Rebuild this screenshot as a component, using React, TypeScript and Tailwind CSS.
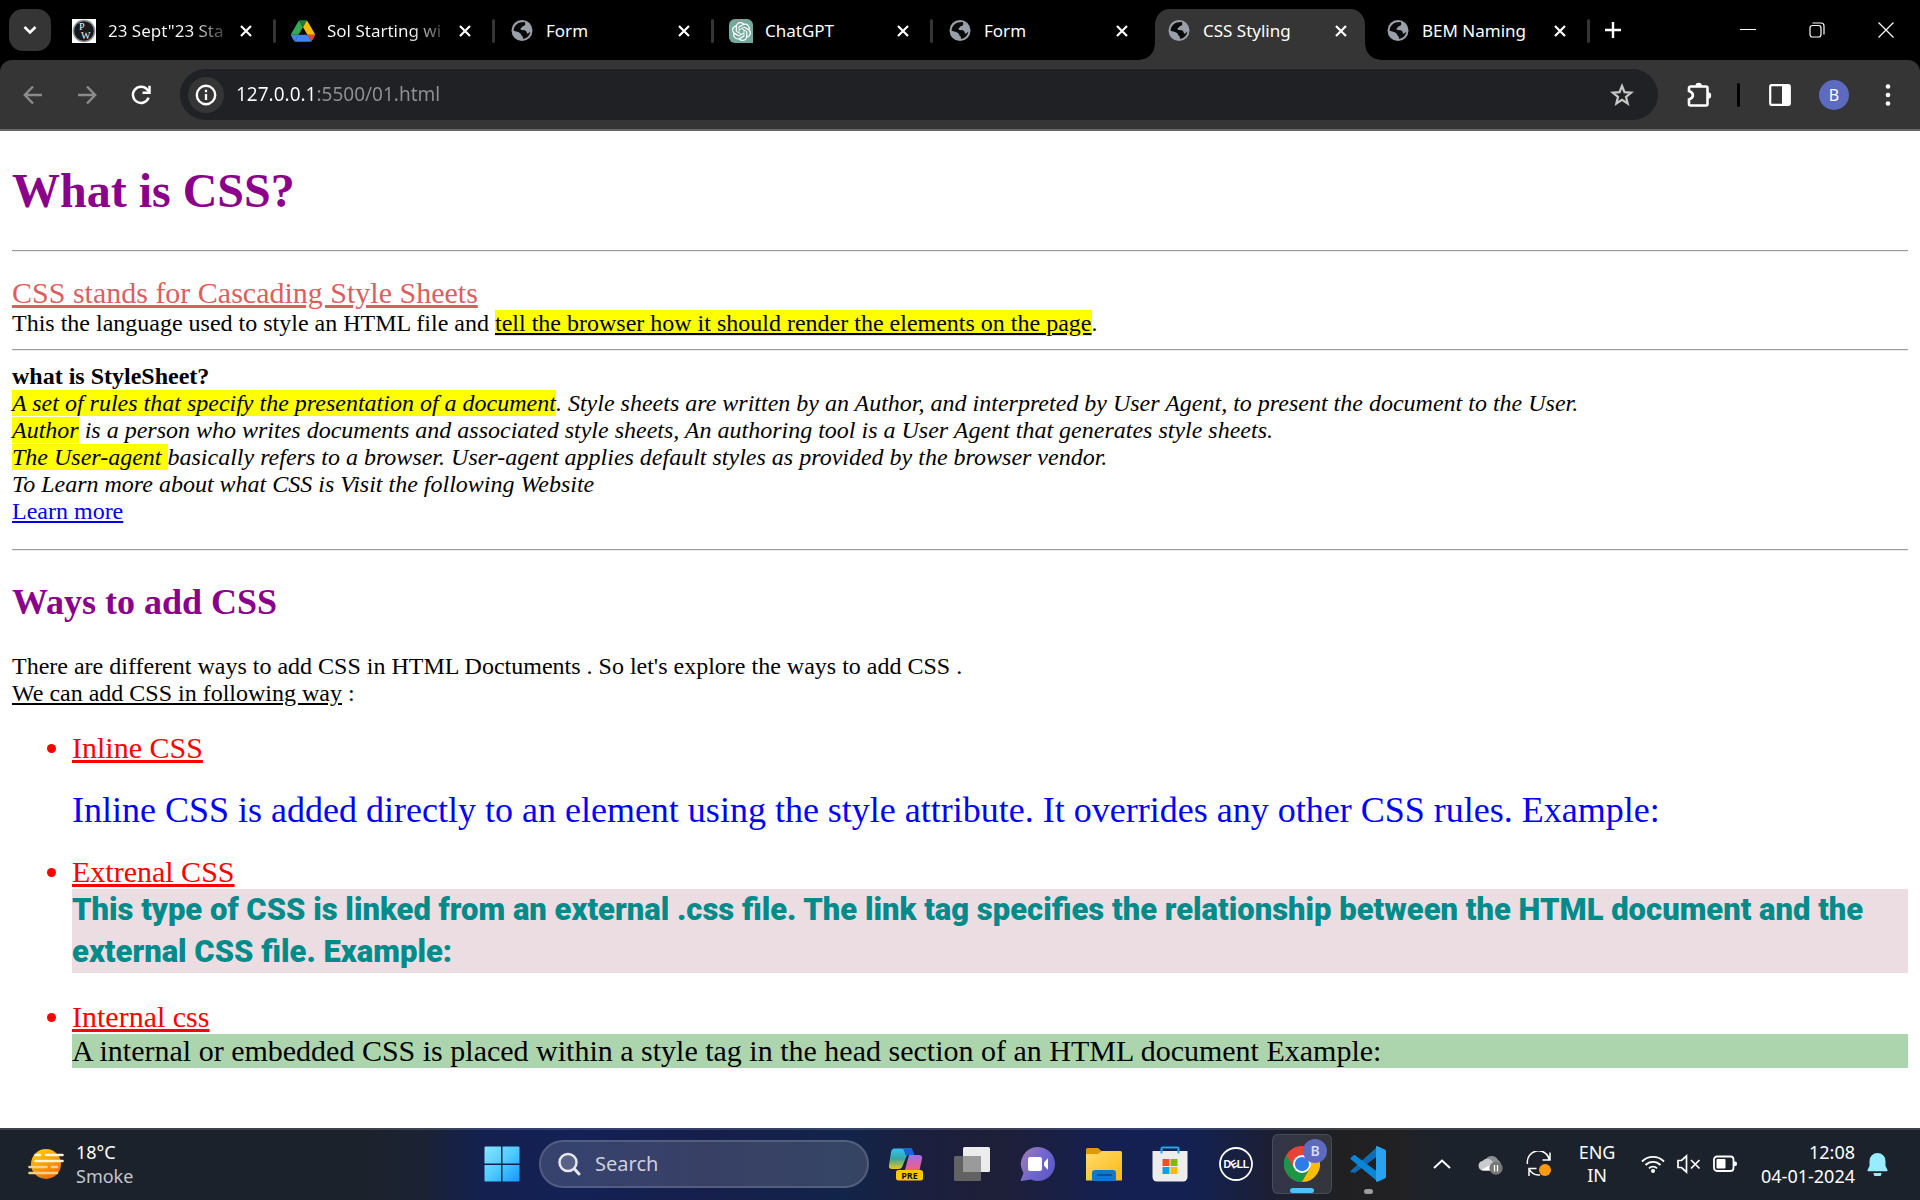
import type { ReactNode } from "react";
import { SiOpenai } from "react-icons/si";

const serif = "font-['Liberation_Serif','Times_New_Roman',serif]";
const sans = "font-['Noto_Sans','Segoe_UI',sans-serif]";

/* ---------- Tab icons ---------- */

function GlobeIcon() {
  return (
    <svg viewBox="0 0 24 24" className="size-6" aria-hidden="true">
      <circle cx="12" cy="11.5" r="10.5" fill="#9aa0a9" />
      <path
        d="M3.6 11.8C3.7 7.200 7 3.700 11.600 3.300L14.900 2.900C15.700 5 15.200 6.600 13.700 7C12 7.200 12.300 8.500 11.200 8.800C10.200 9.300 10.400 10.700 11.500 11L15 11.300C17.200 12.300 16.300 14.300 17.700 14.800L20.300 12.800C19.700 16.700 16.600 19.600 13.100 19.900L12.700 17.500C11.300 17 11.200 15.300 10.200 14.300C8.400 12.800 6 12.800 3.600 11.800Z"
        fill="#0a0a0b"
      />
    </svg>
  );
}

function PwIcon() {
  return (
    <svg viewBox="0 0 24 24" className="size-6" aria-hidden="true">
      <rect width="24" height="24" fill="#fff" />
      <circle cx="12" cy="12" r="11.300" fill="#8a8f92" />
      <circle cx="12" cy="12" r="9.800" fill="#161a1c" />
      <text x="7" y="11" fontSize="10" fill="#f2f2f2" fontFamily="Liberation Serif, serif">P</text>
      <text x="9" y="19.500" fontSize="10" fill="#f2f2f2" fontFamily="Liberation Serif, serif">W</text>
    </svg>
  );
}

function DriveIcon() {
  return (
    <svg viewBox="0 0 87.3 78" className="size-6" aria-hidden="true">
      <path d="m6.6 66.85 3.85 6.65c.8 1.4 1.95 2.5 3.3 3.3l13.75-23.8H0c0 1.55.4 3.1 1.2 4.5z" fill="#4285f4" />
      <path d="M43.65 25 29.9 1.2c-1.35.8-2.5 1.9-3.300 3.3l-25.4 44A9.06 9.06 0 0 0 0 53h27.5z" fill="#34a853" />
      <path d="M73.55 76.8c1.35-.8 2.5-1.9 3.3-3.3l1.6-2.75 7.65-13.25c.8-1.4 1.2-2.95 1.2-4.5H59.8l5.85 11.5z" fill="#ea4335" />
      <path d="M43.65 25 57.4 1.2C56.05.4 54.5 0 52.9 0H34.400c-1.6 0-3.15.45-4.5 1.2z" fill="#188038" />
      <path d="M59.8 53H27.5L13.75 76.8c1.35.8 2.9 1.2 4.5 1.2h50.8c1.6 0 3.15-.45 4.5-1.2z" fill="#4285f4" />
      <path d="m73.400 26.5-12.7-22c-.8-1.4-1.95-2.5-3.300-3.3L43.65 25 59.8 53h27.45c0-1.55-.4-3.1-1.2-4.5z" fill="#fbbc04" />
    </svg>
  );
}

function GptIcon() {
  return (
    <span className="flex size-6 items-center justify-center rounded-md rounded-br-none bg-[#74aa9c]">
      <SiOpenai className="size-[19px] text-white" />
    </span>
  );
}

function CloseIcon() {
  return (
    <svg viewBox="0 0 12 12" className="size-3" aria-hidden="true">
      <path d="M1 1 11 11M11 1 1 11" stroke="#fff" strokeWidth="2.200" />
    </svg>
  );
}

/* ---------- Browser chrome ---------- */

type TabInfo = { title: string; icon: ReactNode; faded?: boolean; active?: boolean; divider?: boolean };

const tabs: TabInfo[] = [
  { title: '23 Sept"23 Sta', icon: <PwIcon />, faded: true, divider: true },
  { title: "Sol Starting wi", icon: <DriveIcon />, faded: true, divider: true },
  { title: "Form", icon: <GlobeIcon />, divider: true },
  { title: "ChatGPT", icon: <GptIcon />, divider: true },
  { title: "Form", icon: <GlobeIcon /> },
  { title: "CSS Styling", icon: <GlobeIcon />, active: true },
  { title: "BEM Naming", icon: <GlobeIcon />, divider: true },
];

function Tab({ title, icon, faded, active, divider }: TabInfo) {
  return (
    <li className="relative w-[219px]">
      {active && (
        <>
          <span className="absolute inset-y-0 right-1.5 left-[3px] rounded-t-[15px] bg-[#353535]" />
          <span className="absolute bottom-0 -left-3 size-[15px] bg-[radial-gradient(circle_at_0_0,#000_14px,#353535_15px)]" />
          <span className="absolute -right-[9px] bottom-0 size-[15px] bg-[radial-gradient(circle_at_100%_0,#000_14px,#353535_15px)]" />
        </>
      )}
      <div className="relative flex h-11 items-center pl-[15px]">
        {icon}
        <span
          className={
            faded
              ? "ml-3 w-[118px] bg-linear-to-r from-white from-70% to-white/20 bg-clip-text text-[17px] whitespace-nowrap text-transparent"
              : "ml-3 w-[118px] text-[17px] whitespace-nowrap text-white"
          }
        >
          {title}
        </span>
        <button type="button" aria-label={`Close ${title}`} className="ml-2 flex size-6 items-center justify-center">
          <CloseIcon />
        </button>
        {divider && <span className="ml-auto h-6 w-[3px] rounded-full bg-[#353535]" />}
      </div>
    </li>
  );
}

function TabStrip() {
  return (
    <div className="flex h-[60px] items-start bg-black pt-[9px]">
      <button type="button" aria-label="Search tabs" className="ml-[9px] flex size-[42px] shrink-0 items-center justify-center rounded-[14px] bg-[#353535]">
        <svg viewBox="0 0 14 10" className="h-2.5 w-3.5">
          <path d="m1.500 2 5.500 5.500L12.500 2" stroke="#fff" strokeWidth="2.600" fill="none" />
        </svg>
      </button>
      <ul className="ml-1.5 flex h-[51px]">
        {tabs.map((tab, index) => (
          <Tab key={index} {...tab} />
        ))}
      </ul>
      <button type="button" aria-label="New tab" className="ml-0.5 flex size-[42px] items-center justify-center">
        <svg viewBox="0 0 16 16" className="size-4">
          <path d="M8 0v16M0 8h16" stroke="#fff" strokeWidth="2.400" />
        </svg>
      </button>
      <div className="ml-auto flex h-[42px]">
        <button type="button" aria-label="Minimize" className="flex w-[69px] items-center justify-center">
          <svg viewBox="0 0 16 16" className="size-4"><path d="M0 7.500h16" stroke="#fff" /></svg>
        </button>
        <button type="button" aria-label="Restore" className="flex w-[69px] items-center justify-center">
          <svg viewBox="0 0 16 16" className="size-4" fill="none" stroke="#fff" strokeWidth="1.200">
            <rect x="1" y="3.500" width="11" height="11.500" rx="2.500" />
            <path d="M3.500 1H12a3 3 0 0 1 3 3v8.500" />
          </svg>
        </button>
        <button type="button" aria-label="Close window" className="flex w-[69px] items-center justify-center">
          <svg viewBox="0 0 16 16" className="size-4"><path d="m.5.5 15 15m0-15-15 15" stroke="#fff" strokeWidth="1.200" /></svg>
        </button>
      </div>
    </div>
  );
}

function Toolbar() {
  return (
    <div className="bg-black">
      <div className="flex h-[71px] items-center rounded-t-xl border-b-2 border-[#666] bg-[#353535] pr-5 pl-[15px]">
        <button type="button" aria-label="Back" className="flex w-9 justify-center">
          <svg viewBox="0 0 20 20" className="size-5" fill="none" stroke="#8b8b8b" strokeWidth="2.400">
            <path d="M19 10H2.500M10 1.500 1.800 10l8.200 8.500" />
          </svg>
        </button>
        <button type="button" aria-label="Forward" className="ml-[18px] flex w-9 justify-center">
          <svg viewBox="0 0 20 20" className="size-5" fill="none" stroke="#8b8b8b" strokeWidth="2.400">
            <path d="M1 10h16.500M10 1.500l8.200 8.500-8.200 8.500" />
          </svg>
        </button>
        <button type="button" aria-label="Reload" className="ml-[18px] flex w-9 justify-center">
          <svg viewBox="0 0 20 20" className="size-5" fill="none" stroke="#fff" strokeWidth="2.500">
            <path d="M17.600 12.800A8.100 8.100 0 1 1 16.200 4.500L18 6.500" />
            <path d="M18.500.8v7h-7" />
          </svg>
        </button>
        <div className="ml-[21px] flex h-[51px] flex-1 items-center rounded-full bg-[#202124] pr-6 pl-2">
          <button type="button" aria-label="Site information" className="flex size-9 items-center justify-center rounded-full bg-[#353535]">
            <svg viewBox="0 0 22 22" className="size-[22px]">
              <circle cx="11" cy="11" r="9.200" fill="none" stroke="#fff" strokeWidth="2.400" />
              <path d="M11 10v6M11 5.800v2.400" stroke="#fff" strokeWidth="2.300" />
            </svg>
          </button>
          <input
            aria-label="Address"
            defaultValue="127.0.0.1:5500/01.html"
            className="ml-3 min-w-0 flex-1 bg-linear-to-r from-white from-[79px] to-[#8f9195] to-[79px] bg-clip-text text-[19px] text-transparent outline-none"
          />
          <button type="button" aria-label="Bookmark this page">
            <svg viewBox="0 0 24 24" className="size-6" fill="none" stroke="#c7c7c7" strokeWidth="2.200">
              <path d="m12 3 2.500 6.200 6.700.5-5.200 4.300 1.700 6.500-5.700-3.600-5.700 3.600L8 14 2.800 9.700l6.700-.5Z" />
            </svg>
          </button>
        </div>
        <button type="button" aria-label="Extensions" className="ml-7 flex w-[26px] justify-center">
          <svg viewBox="0 0 26 26" className="size-[26px]">
            <path
              d="M4.500 4.500H20a1.500 1.500 0 0 1 1.500 1.500v16a1.500 1.500 0 0 1-1.500 1.500H4.500A1.500 1.500 0 0 1 3 22v-4.500c5.200-1.800 5.200-6.700 0-8.500V6a1.500 1.500 0 0 1 1.500-1.500Z"
              fill="none"
              stroke="#fff"
              strokeWidth="2.600"
            />
            <path d="M9.500 4a3.200 3.200 0 0 1 6.400 0ZM22 10.300a3.200 3.200 0 0 1 0 6.400Z" fill="#fff" />
          </svg>
        </button>
        <span className="ml-[25px] h-6 w-[3px] rounded-full bg-black" />
        <button type="button" aria-label="Side panel" className="ml-7 flex w-6 justify-center">
          <svg viewBox="0 0 22 22" className="size-[22px]">
            <rect x="1.200" y="1.200" width="19.600" height="19.600" rx="1.500" fill="none" stroke="#fff" strokeWidth="2.200" />
            <path d="M13 1h8v20h-8z" fill="#fff" />
          </svg>
        </button>
        <button type="button" aria-label="Profile" className="ml-[27px] flex size-[30px] items-center justify-center rounded-full bg-[#5c6bc0] text-base text-white">
          B
        </button>
        <button type="button" aria-label="Menu" className="ml-[27px] flex w-6 justify-center">
          <svg viewBox="0 0 6 24" className="h-6 w-1.5" fill="#fff">
            <circle cx="3" cy="3.500" r="2.300" />
            <circle cx="3" cy="12" r="2.300" />
            <circle cx="3" cy="20.500" r="2.300" />
          </svg>
        </button>
      </div>
    </div>
  );
}

/* ---------- Page ---------- */

function Rule() {
  return <hr className="border-t border-b border-t-[#9a9a9a] border-b-[#ededed]" />;
}

function Mark({ children }: { children: ReactNode }) {
  return <mark className="bg-[#ff0] text-inherit">{children}</mark>;
}

function Article() {
  return (
    <main className={`${serif} flex-1 bg-white px-3 text-2xl leading-[27px] text-black`}>
      <h1 className="my-8 text-5xl leading-[55px] font-bold text-[#8b008b]">What is CSS?</h1>
      <Rule />
      <p className="mt-6 text-[30px] leading-[34px] text-[#dc5f5f] underline">CSS stands for Cascading Style Sheets</p>
      <p className="mb-3">
        This the language used to style an HTML file and{" "}
        <u><Mark>tell the browser how it should render the elements on the page</Mark></u>.
      </p>
      <Rule />
      <p className="mt-3 font-bold">what is StyleSheet?</p>
      <div className="italic">
        <p>
          <Mark>A set of rules that specify the presentation of a document</Mark>. Style sheets are written by an
          Author, and interpreted by User Agent, to present the document to the User.
        </p>
        <p>
          <Mark>Author</Mark> is a person who writes documents and associated style sheets, An authoring tool is a User
          Agent that generates style sheets.
        </p>
        <p>
          <Mark>The User-agent </Mark>basically refers to a browser. User-agent applies default styles as provided by
          the browser vendor.
        </p>
        <p>To Learn more about what CSS is Visit the following Website</p>
      </div>
      <p className="mb-6">
        <a href="#learn-more" className="text-[#00e] underline">Learn more</a>
      </p>
      <Rule />
      <h2 className="mt-[31px] mb-[30px] text-4xl leading-[41px] font-bold text-[#8b008b]">Ways to add CSS</h2>
      <p>There are different ways to add CSS in HTML Doctuments . So let's explore the ways to add CSS .</p>
      <p><u>We can add CSS in following way</u> :</p>
      <ul className="my-6 list-disc pl-[60px] text-[30px] leading-[34px] text-[#f00]">
        <li>
          <u>Inline CSS</u>
          <p className="my-6 text-4xl leading-[42px] text-[#00f]">
            Inline CSS is added directly to an element using the style attribute. It overrides any other CSS rules.
            Example:
          </p>
        </li>
        <li>
          <u>Extrenal CSS</u>
          <p className="mb-[27px] bg-[#ecdde3] font-['Impact','Roboto',sans-serif] text-[31px] leading-[42px] font-black text-[#008b8b]">
            This type of CSS is linked from an external .css file. The link tag specifies the relationship between the
            HTML document and the external CSS file. Example:
          </p>
        </li>
        <li>
          <u>Internal css</u>
          <p className="bg-[#add5ad] text-black">
            A internal or embedded CSS is placed within a style tag in the head section of an HTML document Example:
          </p>
        </li>
      </ul>
    </main>
  );
}

/* ---------- Taskbar icons ---------- */

function WeatherIcon() {
  return (
    <svg viewBox="0 0 36 30" className="h-[30px] w-9" aria-hidden="true">
      <defs>
        <linearGradient id="sun" x1="0.200" y1="0" x2="0.700" y2="1">
          <stop offset="0" stopColor="#ffd000" />
          <stop offset="1" stopColor="#f06a0a" />
        </linearGradient>
      </defs>
      <circle cx="18" cy="15" r="15" fill="url(#sun)" />
      <g strokeWidth="2.600" strokeLinecap="round">
        <path d="M7.500 6H12M18 6h16.500M7.500 12h27" stroke="#fff3d6" />
        <path d="M1.500 18h17M24 18h5M1.500 24H29" stroke="#f3d08a" />
      </g>
    </svg>
  );
}

function StartIcon() {
  return (
    <svg viewBox="0 0 36 36" className="size-9" aria-hidden="true">
      <defs>
        <linearGradient id="win" x1="0" y1="0" x2="1" y2="1" gradientUnits="objectBoundingBox">
          <stop offset="0" stopColor="#8be3ff" />
          <stop offset="0.500" stopColor="#4fcbff" />
          <stop offset="1" stopColor="#1298ff" />
        </linearGradient>
      </defs>
      <path
        d="M1.500.5H17v17H.5v-16a1 1 0 0 1 1-1ZM18.500.5h16a1 1 0 0 1 1 1v16h-17ZM.5 19H17v16.500H1.500a1 1 0 0 1-1-1ZM18.500 19h17v15.500a1 1 0 0 1-1 1h-16Z"
        fill="url(#win)"
      />
    </svg>
  );
}

function CopilotIcon() {
  return (
    <svg viewBox="0 0 36 36" className="size-9" aria-hidden="true">
      <defs>
        <linearGradient id="cpA" x1="0" y1="0" x2="0" y2="1">
          <stop offset="0" stopColor="#35c1f5" />
          <stop offset="0.500" stopColor="#3aa5a0" />
          <stop offset="1" stopColor="#e8c81e" />
        </linearGradient>
        <linearGradient id="cpB" x1="0" y1="0" x2="0" y2="1">
          <stop offset="0" stopColor="#a768f0" />
          <stop offset="1" stopColor="#f2607c" />
        </linearGradient>
      </defs>
      <path d="M6.500 2.500h17L26 9h-7l-4.500 11c-.7 2-2 3-4 3H4c-2.500 0-3.500-1.500-3-4L3 6c.6-2.300 1.500-3.500 3.500-3.500Z" fill="url(#cpA)" />
      <path d="M17 2.500h4.500c2.500 0 3.800 1.500 4.500 6.500h-9c0-3-1-5-3-6.500Z" fill="#1665dc" />
      <path d="M21 9h10c2.500 0 3.500 1.500 3 4l-2.500 11H17Z" fill="url(#cpB)" />
      <rect x="8" y="24" width="27" height="10.500" rx="2.500" fill="#ffc800" />
      <text x="21.500" y="32.500" fontSize="9" fontWeight="bold" textAnchor="middle" fill="#111" fontFamily="Open Sans, sans-serif">PRE</text>
    </svg>
  );
}

function TaskViewIcon() {
  return (
    <svg viewBox="0 0 36 36" className="size-9" aria-hidden="true">
      <rect x="9" y="1" width="27" height="25" rx="1.500" fill="#ececec" />
      <rect x="0" y="10" width="27" height="25" rx="1.500" fill="#626262" />
      <path d="M9 10h16.500a1.500 1.500 0 0 1 1.500 1.500V26H9Z" fill="#9a9a9a" />
    </svg>
  );
}

function ChatIcon() {
  return (
    <svg viewBox="0 0 36 36" className="size-9" aria-hidden="true">
      <defs>
        <linearGradient id="chat" x1="0" y1="0.200" x2="1" y2="0.800">
          <stop offset="0" stopColor="#a07ab4" />
          <stop offset="0.500" stopColor="#6f67d0" />
          <stop offset="1" stopColor="#5b57c4" />
        </linearGradient>
      </defs>
      <path d="M18 1a17 17 0 1 1-7 32.500L1.500 35c-.8 0-1-.6-.6-1.200L3.500 27A17 17 0 0 1 18 1Z" fill="url(#chat)" />
      <rect x="8" y="11" width="14" height="14" rx="2" fill="#fff" />
      <path d="M24 16.500 28 12v12l-4-4.500Z" fill="#fff" />
    </svg>
  );
}

function FolderIcon() {
  return (
    <svg viewBox="0 0 36 36" className="size-9" aria-hidden="true">
      <defs>
        <linearGradient id="fold" x1="0" y1="0" x2="1" y2="1">
          <stop offset="0" stopColor="#ffdc6e" />
          <stop offset="1" stopColor="#fbb812" />
        </linearGradient>
      </defs>
      <path d="M0 3.500A1.500 1.500 0 0 1 1.500 2H12l4 3.500V9H0Z" fill="#dd9a04" />
      <path d="M0 8h12l4-3h18.500A1.500 1.500 0 0 1 36 6.500V34.500H0Z" fill="url(#fold)" />
      <path d="M6 35V27a3 3 0 0 1 3-3h18a3 3 0 0 1 3 3v8Z" fill="#0f78cc" />
      <path d="M12 29h13" stroke="#08539a" strokeWidth="2" strokeLinecap="round" />
    </svg>
  );
}

function StoreIcon() {
  return (
    <svg viewBox="0 0 36 36" className="size-9" aria-hidden="true">
      <path d="M.5 5h35v26a4.500 4.500 0 0 1-4.500 4.500H5A4.500 4.500 0 0 1 .5 31Z" fill="#ededed" />
      <path d="M9.500 7.500V2.500a1 1 0 0 1 1-1h15a1 1 0 0 1 1 1v5" fill="none" stroke="#22a7ea" strokeWidth="2" />
      <path d="M10.500 13h7v7h-7z" fill="#f25022" />
      <path d="M18.500 13h7v7h-7z" fill="#7fba00" />
      <path d="M10.500 21h7v7h-7z" fill="#00a4ef" />
      <path d="M18.500 21h7v7h-7z" fill="#ffb900" />
    </svg>
  );
}

function DellIcon() {
  return (
    <svg viewBox="0 0 36 36" className="size-9" aria-hidden="true" fill="#fff" fontFamily="Liberation Sans, sans-serif" fontWeight="bold" fontSize="10.500">
      <circle cx="18" cy="18" r="16" fill="none" stroke="#fff" strokeWidth="1.800" />
      <text x="5.500" y="21.700">D</text>
      <text x="12.500" y="21.700" transform="rotate(-32 16 18)">E</text>
      <text x="18.800" y="21.700">L</text>
      <text x="24.800" y="21.700">L</text>
    </svg>
  );
}

function ChromeIcon() {
  return (
    <svg viewBox="0 0 48 48" className="size-9" aria-hidden="true">
      <circle cx="24" cy="24" r="24" fill="#ea4335" />
      <path d="M3.200 12A24 24 0 0 0 24 48L34.400 30 24 24 13.600 30Z" fill="#1e9447" />
      <path d="M44.800 12A24 24 0 0 1 24 48L34.400 30 24 12Z" fill="#fbbc04" />
      <circle cx="24" cy="24" r="12" fill="#fff" />
      <circle cx="24" cy="24" r="9.500" fill="#2f7bea" />
    </svg>
  );
}

function VsCodeIcon() {
  return (
    <svg viewBox="0 0 36 36" className="size-9" aria-hidden="true">
      <path d="M1 24.500 27 1v9.500L5.400 26.500c-.7.500-1.500.5-2.200 0L1 26.500c-.6-.6-.6-1.400 0-2Z" fill="#0e6cb4" />
      <path d="M1 11.500 3.200 9.500c.7-.6 1.500-.6 2.200 0L27 25.500V35L1 13.500c-.7-.6-.7-1.400 0-2Z" fill="#0a86d8" />
      <path d="M26 .5c.6-.5 1-.5 1.700-.2l7 3.300c.8.400 1.300 1 1.300 2v24.800c0 1-.5 1.600-1.300 2l-7 3.300c-.7.3-1.200.2-1.700-.3Z" fill="#29a3ef" />
    </svg>
  );
}

function TaskButton({ label, children }: { label: string; children: ReactNode }) {
  return (
    <button type="button" aria-label={label} className="flex h-[60px] w-[66px] items-center justify-center">
      {children}
    </button>
  );
}

function Taskbar() {
  return (
    <footer className="grid h-[72px] grid-cols-[47fr_auto_52fr] items-center border-t-2 border-white/15 bg-[linear-gradient(90deg,#1c222c_0%,#1c222c_19%,#1b2334_22%,#14204f_25%,#132155_30%,#161f4b_37%,#12244a_44%,#1b1f3d_48%,#1e1f38_52%,#142052_58%,#132152_62%,#1b1f35_66%,#202022_70%,#212123_73%,#1c222c_75%,#1c222c_100%)] bg-origin-border pb-0.5">
      <button type="button" className="flex items-center gap-3 justify-self-start pl-7 text-left">
        <WeatherIcon />
        <span className="text-lg leading-6 text-white">
          18°C
          <span className="block text-[#c3c6ca]">Smoke</span>
        </span>
      </button>

      <div className="flex items-center">
        <TaskButton label="Start"><StartIcon /></TaskButton>
        <label className="mx-1 flex h-12 w-[330px] items-center rounded-full border-2 border-white/15 bg-white/15 pl-4">
          <svg viewBox="0 0 24 24" className="size-6" fill="none" stroke="#e6e7ec" strokeLinecap="round">
            <circle cx="11" cy="10.500" r="8.500" strokeWidth="2.500" fill="#5a6189" />
            <path d="m17.500 17 4.500 5" strokeWidth="3" />
          </svg>
          <input
            type="search"
            aria-label="Search"
            placeholder="Search"
            className="ml-3.5 w-60 bg-transparent text-xl text-white outline-none placeholder:text-[#cdd0dc]"
          />
        </label>
        <TaskButton label="Copilot"><CopilotIcon /></TaskButton>
        <TaskButton label="Task view"><TaskViewIcon /></TaskButton>
        <TaskButton label="Chat"><ChatIcon /></TaskButton>
        <TaskButton label="File Explorer"><FolderIcon /></TaskButton>
        <TaskButton label="Microsoft Store"><StoreIcon /></TaskButton>
        <TaskButton label="Dell"><DellIcon /></TaskButton>
        <TaskButton label="Google Chrome">
          <span className="relative flex size-[60px] items-center justify-center rounded-md border border-white/10 bg-white/10">
            <ChromeIcon />
            <span className="absolute top-1 right-1 flex size-6 items-center justify-center rounded-full bg-[#5c6bc0] text-sm font-semibold text-[#d5daf5]">
              B
            </span>
            <span className="absolute bottom-0 h-[5px] w-6 rounded-full bg-[#4cc2ff]" />
          </span>
        </TaskButton>
        <TaskButton label="Visual Studio Code">
          <span className="relative flex size-[60px] items-center justify-center">
            <VsCodeIcon />
            <span className="absolute bottom-0 h-[5px] w-[9px] rounded-full bg-[#9c9c9c]" />
          </span>
        </TaskButton>
      </div>

      <div className="flex items-center justify-end pr-8 text-lg leading-6 text-white">
        <button type="button" aria-label="Show hidden icons">
          <svg viewBox="0 0 18 10" className="h-2.5 w-[18px]" fill="none" stroke="#fff" strokeWidth="2">
            <path d="m1 9 8-7.500L17 9" />
          </svg>
        </button>
        <button type="button" aria-label="OneDrive" className="ml-[27px]">
          <svg viewBox="0 0 25 22" className="h-[22px] w-[25px]">
            <path d="M7 8a7 7 0 0 1 13-1 5 5 0 0 1 0 9H9Z" fill="#8c8f94" />
            <path d="M5 17.500A4.800 4.800 0 0 1 4.500 8 6 6 0 0 1 14 8l5 5-4 4.500Z" fill="#c9cbce" />
            <path d="m3 17 13-7 4 3-5 4.500H5Z" fill="#fff" />
            <circle cx="18" cy="15.200" r="6.600" fill="#777" />
            <path d="M16.500 12v6.500M19.500 12v6.500" stroke="#fff" strokeWidth="1.300" />
          </svg>
        </button>
        <button type="button" aria-label="Update available" className="ml-[23px]">
          <svg viewBox="0 0 26 26" className="size-[26px]" fill="none" stroke="#fff" strokeWidth="1.500">
            <path d="M1.500 13A11 11 0 0 1 23.500 9M24 1.500V9h-7.500" />
            <path d="M3 25v-7.500h7.500M3 17.500A11 11 0 0 0 14 24" />
            <circle cx="19" cy="19" r="6" fill="#ff9a0c" stroke="none" />
          </svg>
        </button>
        <button type="button" className="ml-[25px] w-10 text-center leading-[23px]">
          ENG IN
        </button>
        <button type="button" aria-label="Network, sound and battery" className="ml-6 flex items-center gap-3">
          <svg viewBox="0 0 24 20" className="h-5 w-6" fill="none" stroke="#fff" strokeWidth="1.800">
            <path d="M1 7.500a15.500 15.500 0 0 1 22 0M4.500 11a10.500 10.500 0 0 1 15 0M8 14.300a5.600 5.600 0 0 1 8 0" />
            <circle cx="12" cy="17" r="2" fill="#fff" stroke="none" />
          </svg>
          <svg viewBox="0 0 24 20" className="h-5 w-6" fill="none" stroke="#fff" strokeWidth="1.700">
            <path d="M1 6.500h3.500l5-4.500v16l-5-4.500H1ZM14 6l8.500 8.500M22.500 6 14 14.500" />
          </svg>
          <svg viewBox="0 0 24 20" className="h-5 w-6">
            <rect x="1" y="2.500" width="19.500" height="14.500" rx="3" fill="none" stroke="#fff" strokeWidth="1.800" />
            <rect x="3.500" y="5" width="9" height="9.500" rx="1" fill="#fff" />
            <path d="M21 7.500h1.500q1.500 0 1.500 2.200T22.500 12H21Z" fill="#fff" />
          </svg>
        </button>
        <button type="button" className="ml-6 text-right">
          12:08
          <span className="block">04-01-2024</span>
        </button>
        <button type="button" aria-label="Notifications" className="ml-3">
          <svg viewBox="0 0 21 24" className="h-6 w-[21px]" fill="#98ecfe">
            <path d="M10.500 1a8 8 0 0 1 8 8v5l2 4c.3.800 0 1.300-.8 1.300H1.300C.5 19.300.2 18.800.5 18l2-4V9a8 8 0 0 1 8-8ZM6.500 21h8a4 4 0 0 1-8 0Z" />
          </svg>
        </button>
      </div>
    </footer>
  );
}

export default function App() {
  return (
    <div className={`${sans} flex min-h-screen flex-col bg-white`}>
      <header>
        <TabStrip />
        <Toolbar />
      </header>
      <Article />
      <Taskbar />
    </div>
  );
}
